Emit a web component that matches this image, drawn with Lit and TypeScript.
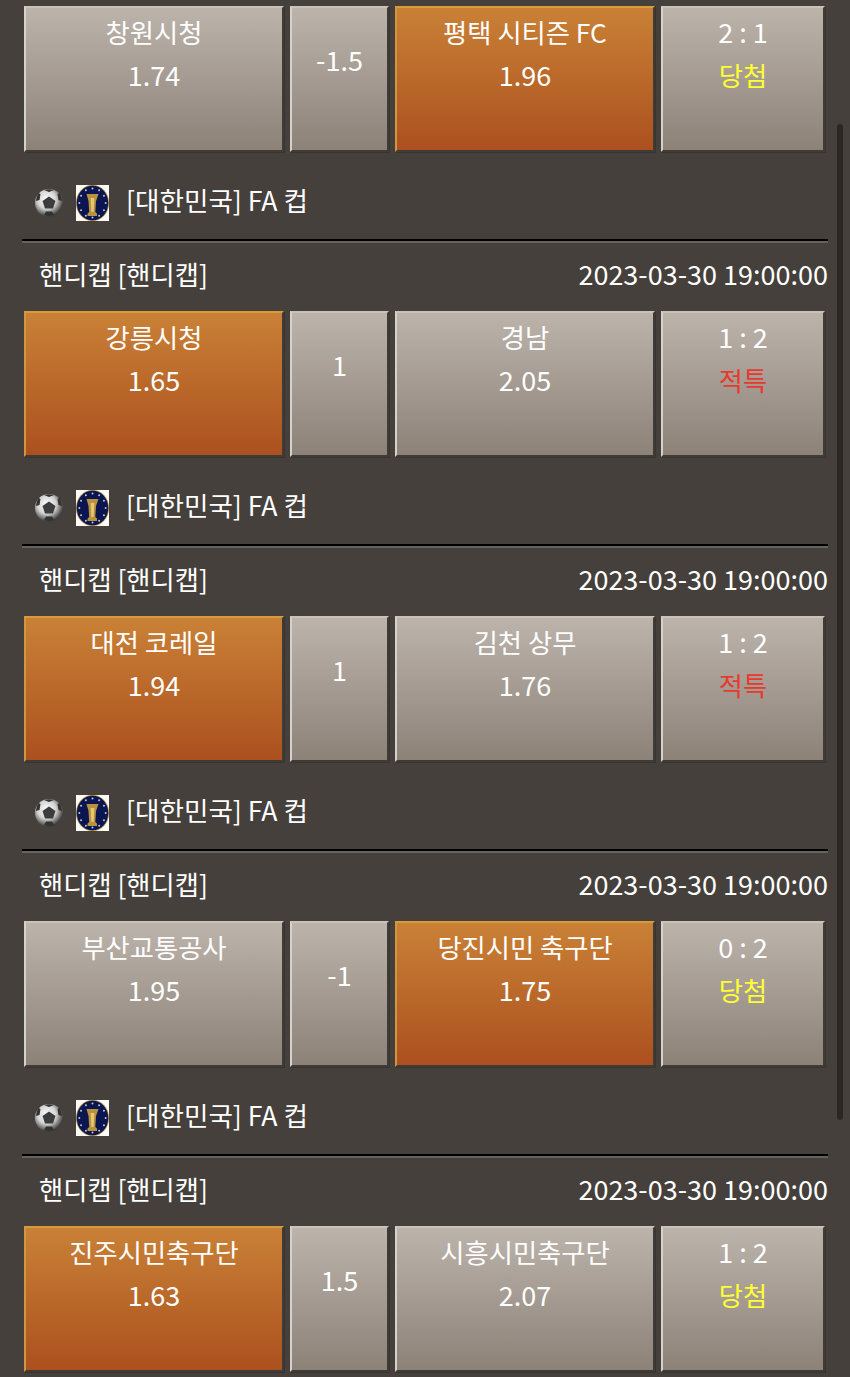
import { LitElement, html, css, svg } from "lit";
import { customElement } from "lit/decorators.js";

interface Bet {
  home: string; homeOdds: string; line: string; away: string; awayOdds: string;
  score: string; result: string; win: boolean; pick: "home" | "away";
}

const BETS: Bet[] = [
  { home: "강릉시청", homeOdds: "1.65", line: "1", away: "경남", awayOdds: "2.05", score: "1 : 2", result: "적특", win: false, pick: "home" },
  { home: "대전 코레일", homeOdds: "1.94", line: "1", away: "김천 상무", awayOdds: "1.76", score: "1 : 2", result: "적특", win: false, pick: "home" },
  { home: "부산교통공사", homeOdds: "1.95", line: "-1", away: "당진시민 축구단", awayOdds: "1.75", score: "0 : 2", result: "당첨", win: true, pick: "away" },
  { home: "진주시민축구단", homeOdds: "1.63", line: "1.5", away: "시흥시민축구단", awayOdds: "2.07", score: "1 : 2", result: "당첨", win: true, pick: "home" },
];

const FIRST: Bet = { home: "창원시청", homeOdds: "1.74", line: "-1.5", away: "평택 시티즌 FC", awayOdds: "1.96", score: "2 : 1", result: "당첨", win: true, pick: "away" };

const stars = [0, 30, 60, 90, 120, 150, 180, 210, 240, 270, 300, 330].map((a) => {
  const r = (a * Math.PI) / 180;
  return svg`<circle cx=${16.5 + 13.2 * Math.cos(r)} cy=${18.5 + 14.6 * Math.sin(r)} r="1" fill="#b9c4e0"></circle>`;
});

const ball = html`<svg class="ball" width="30" height="30" viewBox="0 0 30 30">
  <defs>
    <radialGradient id="bg" cx="42%" cy="38%" r="60%">
      <stop offset="0" stop-color="#ffffff"></stop>
      <stop offset=".55" stop-color="#d4d4d4"></stop>
      <stop offset="1" stop-color="#3e3e3c"></stop>
    </radialGradient>
  </defs>
  <circle cx="15" cy="15" r="14" fill="url(#bg)"></circle>
  <path d="M15 8.500l6.500 4.500-2.500 7.500h-8L8.500 13z" fill="#3c3c3c"></path>
  <path d="M10 2l5 2 5-2C17 1 13 1 10 2zM2 13l3.500-1L6.500 6 4.500 5C3 7.500 2.300 10 2 13zM28 13l-3.500-1-1-6 2-1c1.500 2.500 2.200 5 2.500 8zM10 27l2-3.500h6L20 27c-3 1.200-7 1.200-10 0z" fill="#333333"></path>
</svg>`;

const cup = html`<svg class="cup" width="33" height="36" viewBox="0 0 33 36">
  <rect width="33" height="36" fill="#fbfaf4"></rect>
  <ellipse cx="16.500" cy="18" rx="16.500" ry="18" fill="#a8883c"></ellipse>
  <ellipse cx="16.500" cy="18" rx="15.700" ry="17.200" fill="#0b1650"></ellipse>
  <g transform="translate(0 -.5)">${stars}</g>
  <path d="M10.500 9h12l-2.500 7-.7 11 1.700 1.500V31h-9.500v-2.500l1.700-1.500-.7-11z" fill="#b8923f"></path>
  <path d="M14.700 13h3.600l-.7 14h-2.200z" fill="#e6c873"></path>
</svg>`;

@customElement("app-root")
export class AppRoot extends LitElement {
  static styles = css`
    :host {
      display: block;
      position: relative;
      width: 850px;
      height: 1377px;
      overflow: hidden;
      background: #45403b;
      font-family: "Noto Sans CJK KR", "Noto Sans", sans-serif;
      color: #fff;
    }
    .list {
      display: flex;
      flex-direction: column;
      padding: 6px 22px 0 24px;
    }
    .row {
      display: grid;
      grid-template-columns: 260px 99px 260px 164px;
      column-gap: 6px;
      height: 147px;
    }
    .cell {
      box-sizing: border-box;
      height: 146px;
      border-top: 2px solid #c8c2bb;
      border-left: 2px solid #d5d1cb;
      border-right: 2px solid #3f3b36;
      border-bottom: 2px solid #3f3b36;
      box-shadow: 1px 1px 0 #38342f;
      background: linear-gradient(180deg, #bcb3ab 0%, #8c8278 100%);
      display: flex;
      flex-direction: column;
      align-items: center;
      font-size: 26.3px;
      line-height: 44px;
      padding-top: 2px;
      text-align: center;
      white-space: nowrap;
    }
    .num {
      font-size: 27px;
    }
    .odds {
      margin-top: -1px;
    }
    .cell.line {
      padding-top: 30px;
    }
    .cell.on {
      border-top-color: #d79b3e;
      border-left-color: #d2973c;
      background: linear-gradient(180deg, #c98136 0%, #ac501f 100%);
    }
    .win { color: #ffff33; margin-top: -1px; }
    .lose { color: #e8392e; margin-top: -1px; }
    .league {
      display: flex;
      align-items: center;
      box-sizing: border-box;
      height: 86px;
      padding-top: 6px;
      margin-left: 10px;
      font-size: 26.6px;
      color: #fff;
    }
    .ball { margin: 8px 12px 0 0; flex: none; }
    .cup { margin: 8px 17px 0 0; flex: none; }
    .rule {
      width: 806px;
      margin-left: -2px;
      height: 4px;
      box-sizing: border-box;
      border-top: 2px solid #000;
      border-bottom: 2px solid #66625d;
      flex: none;
    }
    .title {
      display: flex;
      justify-content: space-between;
      align-items: center;
      box-sizing: border-box;
      height: 68px;
      width: 804px;
      padding: 0 0 8px 15px;
      font-size: 26.3px;
    }
    .date { font-size: 27px; }
    .track {
      position: absolute;
      left: 837px;
      top: 124px;
      width: 6px;
      height: 996px;
      border-radius: 3px;
      background: #2a2723;
    }
  `;

  private renderRow(b: Bet) {
    return html`<div class="row">
      <div class="cell ${b.pick === "home" ? "on" : ""}"><span>${b.home}</span><span class="num odds">${b.homeOdds}</span></div>
      <div class="cell line"><span class="num">${b.line}</span></div>
      <div class="cell ${b.pick === "away" ? "on" : ""}"><span>${b.away}</span><span class="num odds">${b.awayOdds}</span></div>
      <div class="cell"><span class="num">${b.score}</span><span class=${b.win ? "win" : "lose"}>${b.result}</span></div>
    </div>`;
  }

  render() {
    return html`<div class="list">
        ${this.renderRow(FIRST)}
        ${BETS.map(
          (b) => html`
            <div class="league">${ball}${cup}<span>[대한민국] FA 컵</span></div>
            <div class="rule"></div>
            <div class="title"><span>핸디캡 [핸디캡]</span><span class="date">2023-03-30 19:00:00</span></div>
            ${this.renderRow(b)}
          `
        )}
      </div>
      <div class="track"></div>`;
  }
}
